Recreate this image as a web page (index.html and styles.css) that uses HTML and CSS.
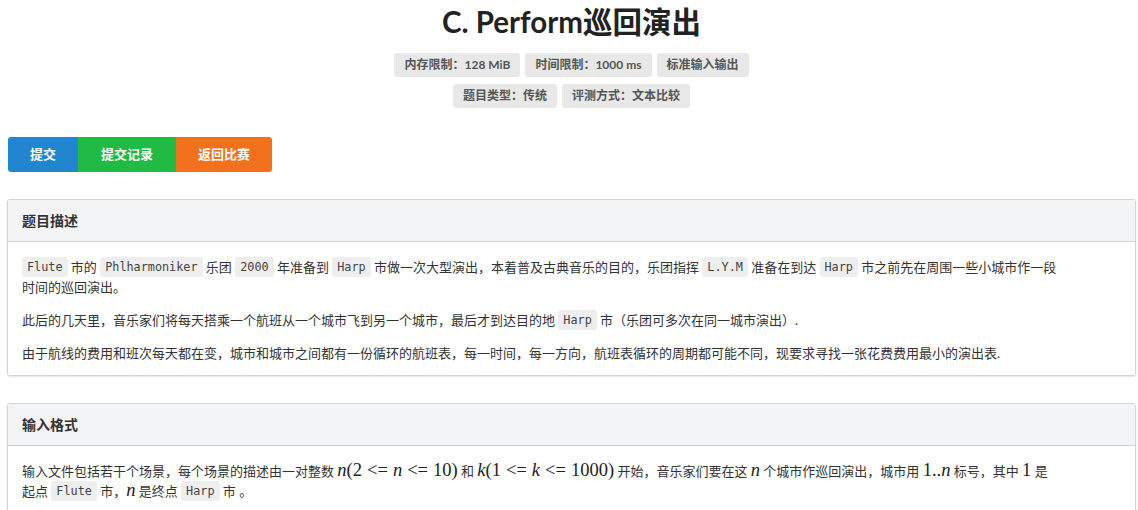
FILE: index.html
```html
<!DOCTYPE html>
<html lang="zh">
<head>
<meta charset="utf-8">
<title>C. Perform巡回演出</title>
<link rel="stylesheet" href="styles.css">
</head>
<body>
<div class="page">
  <h1 class="title">C. Perform巡回演出</h1>
  <div class="labels">
    <span class="label">内存限制：128 MiB</span>
    <span class="label">时间限制：1000 ms</span>
    <span class="label">标准输入输出</span>
  </div>
  <div class="labels">
    <span class="label">题目类型：传统</span>
    <span class="label">评测方式：文本比较</span>
  </div>
  <div class="buttons">
    <a class="btn blue">提交</a>
    <a class="btn green">提交记录</a>
    <a class="btn orange">返回比赛</a>
  </div>
  <div class="segment">
    <div class="seg-head">题目描述</div>
    <div class="seg-body">
      <p><code>Flute</code> 市的 <code>Phlharmoniker</code> 乐团 <code>2000</code> 年准备到 <code>Harp</code> 市做一次大型演出，本着普及古典音乐的目的，乐团指挥 <code>L.Y.M</code> 准备在到达 <code>Harp</code> 市之前先在周围一些小城市作一段时间的巡回演出。</p>
      <p>此后的几天里，音乐家们将每天搭乘一个航班从一个城市飞到另一个城市，最后才到达目的地 <code>Harp</code> 市（乐团可多次在同一城市演出）.</p>
      <p>由于航线的费用和班次每天都在变，城市和城市之间都有一份循环的航班表，每一时间，每一方向，航班表循环的周期都可能不同，现要求寻找一张花费费用最小的演出表.</p>
    </div>
  </div>
  <div class="segment">
    <div class="seg-head">输入格式</div>
    <div class="seg-body">
      <p>输入文件包括若干个场景，每个场景的描述由一对整数 <span class="m"><i>n</i>(2<span class="rel">&lt;=</span><i>n</i><span class="rel">&lt;=</span>10)</span> 和 <span class="m"><i>k</i>(1<span class="rel">&lt;=</span><i>k</i><span class="rel">&lt;=</span>1000)</span> 开始，音乐家们要在这 <span class="m"><i>n</i></span> 个城市作巡回演出，城市用 <span class="m">1..<i>n</i></span> 标号，其中 <span class="m">1</span> 是<span class="nw">起点</span> <code>Flute</code> 市，<span class="m"><i>n</i></span> 是终点 <code>Harp</code> 市 。</p>
    </div>
  </div>
</div>
</body>
</html>
```
FILE: styles.css
```css
html, body {
  margin: 0;
  padding: 0;
  background: #ffffff;
}
body {
  font-family: Lato, "Noto Sans CJK SC", sans-serif;
  color: #333333;
  font-size: 13px;
}
.page {
  margin-left: 7px;
  width: 1129px;
}
.title {
  margin: 0;
  padding-top: 4px;
  text-align: center;
  font-size: 29.5px;
  line-height: 36px;
  font-weight: 700;
  color: #222222;
}
.labels {
  display: flex;
  justify-content: center;
  gap: 5px;
  margin-top: 13px;
}
.labels + .labels {
  margin-top: 7px;
}
.label {
  display: inline-block;
  background: #e8e8e8;
  color: #555555;
  font-size: 12px;
  font-weight: 700;
  line-height: 24px;
  height: 24px;
  padding: 0 10px;
  border-radius: 3px;
}
.buttons {
  display: flex;
  margin: 29px 0 0 1px;
}
.btn {
  display: inline-block;
  color: #ffffff;
  font-size: 13px;
  font-weight: 700;
  line-height: 35px;
  height: 35px;
  padding: 0 22px;
}
.blue { background: #2185d0; border-radius: 3px 0 0 3px; }
.green { background: #21ba45; padding: 0 23px; }
.orange { background: #f2711c; border-radius: 0 3px 3px 0; padding: 0 22px; }
.segment {
  border: 1px solid #d4d4d5;
  border-radius: 3px;
  box-shadow: 0 1px 2px rgba(34, 36, 38, 0.12);
  margin-top: 27px;
}
.seg-head {
  background: #f3f4f5;
  border-bottom: 1px solid #d4d4d5;
  height: 41px;
  line-height: 41px;
  padding: 0 14px;
  font-size: 14px;
  font-weight: 700;
  color: #333333;
}
.seg-body {
  padding: 15px 70px 12px 14px;
}
.seg-body p {
  margin: 0 0 13px;
  line-height: 20px;
}
.seg-body p:last-child {
  margin-bottom: 0;
}
code {
  display: inline-block;
  font-family: "DejaVu Sans Mono", monospace;
  font-size: 11.8px;
  line-height: 20px;
  height: 20px;
  vertical-align: top;
  background: #eeeeee;
  color: #444444;
  padding: 0 5px;
  border-radius: 3px;
}
.m {
  font-family: "Liberation Serif", "DejaVu Serif", serif;
  font-size: 18.5px;
  line-height: 18px;
  color: #222222;
}
.m i {
  font-style: italic;
}
.rel {
  margin: 0 5px;
}
.nw {
  white-space: nowrap;
}
```
